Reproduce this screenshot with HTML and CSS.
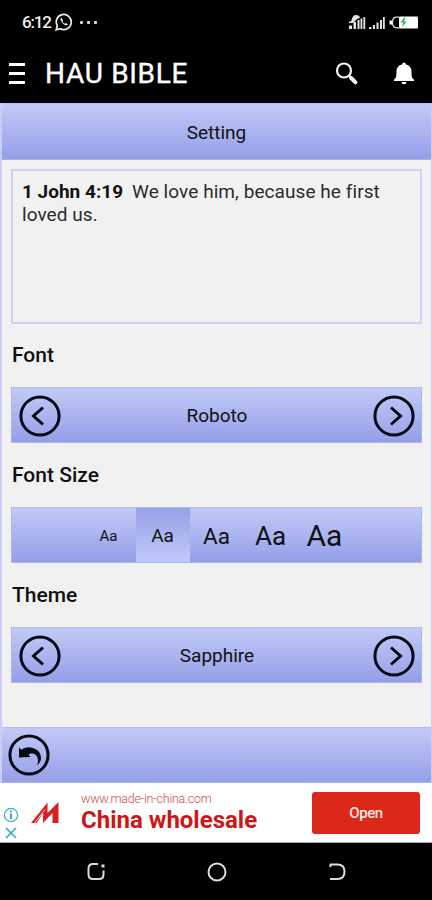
FILE: index.html
```html
<!DOCTYPE html>
<html lang="en">
<head>
<meta charset="utf-8">
<title>HAU Bible</title>
<link rel="stylesheet" href="styles.css">
</head>
<body>
<div class="status">
  <span class="time">6:12</span>
  <svg class="wa" width="18" height="18" viewBox="0 0 18 18"><path d="M1.2 16.8l1.1-4A7.5 7.5 0 1 1 5.400 15.700z" fill="none" stroke="#eee" stroke-width="1.700"/><path d="M6.300 4.600c-1.500 1.200-.8 3.300 1.200 5.400s4.300 3.300 5.400 1.400l-2-1.500-1 .8c-1-.4-2-1.400-2.500-2.500l.8-1z" fill="#eee"/></svg>
  <span class="dots"><i></i><i></i><i></i></span>
  <svg class="signals" width="72" height="18" viewBox="0 0 72 18"><g fill="#e4e4e4"><path d="M1 12.500h3V16H1zM5.500 9H8v7H5.500zM9.500 7h2v9h-2zM12.500 5.500h1.800V16h-1.800zM15.400 4h1.800v12h-1.800zM21 14h2.500v2H21zM25 12h2v4h-2zM28.500 9.500h2V16h-2zM32 7h2v9h-2zM35 4h1.800v12H35z"/><path d="M1 8.500h2l1-3C5 3 6 2 8 2s4 1 4 3l-3 1-2 2-2 2H1z"/></g><path d="M51 4.200h-2.500q-4 0-4 5.300t4 5.300H51" fill="none" stroke="#ddd" stroke-width="1.300"/><rect x="51" y="3.500" width="19" height="12" rx="1" fill="#fff"/><path d="M41.500 7.500H44v4h-2.500z" fill="#fff"/><path d="M56.500 4.500l-4 5h2.800l-1.600 5 5-6h-2.800l1.600-4z" fill="#20b95a"/></svg>
</div>
<header class="appbar">
  <span class="burger"><i></i><i></i><i></i></span>
  <h1>HAU BIBLE</h1>
  <svg class="search" width="24" height="24" viewBox="0 0 24 24" fill="none" stroke="#f5f5f5"><circle cx="9" cy="8.500" r="7" stroke-width="2.200"/><path d="M14 13.500l2.500 2.500" stroke-width="2"/><path d="M16 15.800l4.500 4.500" stroke-width="4" stroke-linecap="round"/></svg>
  <svg class="bell" width="22" height="24" viewBox="0 0 22 24" fill="#fff"><path d="M11 .5c1 0 1.600.8 1.700 1.700C16 3 18.500 5.500 18.500 9.500c0 5 .5 7 2.500 8.100V19H1v-1.400C3 16.500 3.500 14.500 3.500 9.500c0-4 2.500-6.500 5.800-7.300C9.400 1.300 10 .5 11 .5zM8.500 20h5a2.500 2.300 0 0 1-5 0z"/></svg>
</header>
<main class="page">
  <div class="bar heading"><span>Setting</span></div>
  <div class="content">
    <p class="verse"><b>1 John 4:19</b><span>We love him, because he first<br>loved us.</span></p>
    <h2>Font</h2>
    <div class="bar picker">
      <svg width="42" height="42" viewBox="0 0 42 42"><circle cx="21" cy="21" r="19.100"/><path d="M24 12.500L14.500 21l9.500 8.500"/></svg>
      <span>Roboto</span>
      <svg width="42" height="42" viewBox="0 0 42 42"><circle cx="21" cy="21" r="19.100"/><path d="M18 12.500l9.500 8.500-9.500 8.500"/></svg>
    </div>
    <h2 class="size-title">Font Size</h2>
    <div class="bar sizes"><span class="s1">Aa</span><span class="s2 selected">Aa</span><span class="s3">Aa</span><span class="s4">Aa</span><span class="s5">Aa</span></div>
    <h2>Theme</h2>
    <div class="bar picker">
      <svg width="42" height="42" viewBox="0 0 42 42"><circle cx="21" cy="21" r="19.100"/><path d="M24 12.500L14.500 21l9.500 8.500"/></svg>
      <span>Sapphire</span>
      <svg width="42" height="42" viewBox="0 0 42 42"><circle cx="21" cy="21" r="19.100"/><path d="M18 12.500l9.500 8.500-9.500 8.500"/></svg>
    </div>
  </div>
  <footer class="bar back">
    <svg width="42" height="42" viewBox="0 0 42 42"><circle cx="21" cy="21" r="19.100"/><path class="arrow" d="M11 13.500l2.500 2.200c2-1.800 5.500-2.700 9-2.300 6.500.7 10.500 5 10.500 10.500 0 3-1.500 5.500-4 7.500 2-5.500 1-11.500-5-11.800-1.500 0-2.500.3-3.500 1l2 2.400L11 23.500z"/></svg>
  </footer>
</main>
<aside class="ad">
  <svg class="choices" width="16" height="34" viewBox="0 0 16 34" fill="none" stroke="#36a9cf"><circle cx="8.500" cy="9" r="6.600" stroke-width="1.200"/><path d="M8.500 7.500V13M8.500 4.500v1.800" stroke-width="2"/><path d="M3.500 22l10 10M13.500 22l-10 10" stroke-width="1.700"/></svg>
  <svg class="logo" width="30" height="24" viewBox="0 0 30 24"><path fill="#d81f20" d="M0 22L16.500 1.500V12L27.500 1v21H21.500V12L12 22V12L5.500 22z"/><path d="M3.500 22L14 8.500M7 22l5.500-8.500" stroke="#fff" stroke-width=".8"/></svg>
  <div class="copy"><span class="url">www.made-in-china.com</span><strong>China wholesale</strong></div>
  <span class="open">Open</span>
</aside>
<nav class="sysnav">
  <svg width="20" height="20" viewBox="0 0 20 20"><path d="M12 2H7Q2.500 2 2.500 6.500v6q0 4.500 4.500 4.500h6q4.500 0 4.500-4.500V8.500"/><path d="M15.500 4h3" stroke-width="3"/></svg>
  <svg width="20" height="20" viewBox="0 0 20 20"><circle cx="10" cy="10" r="8.500"/></svg>
  <svg width="20" height="20" viewBox="0 0 20 20"><path d="M3 2.500h7.500q7 0 7 7.200t-7 7.300H3M3.500 2v3"/></svg>
</nav>
</body>
</html>
```
FILE: styles.css
```css
* { box-sizing: border-box; }
body { margin: 0; width: 432px; height: 900px; overflow: hidden; background: #000; font-family: Roboto, sans-serif; color: #111; }
svg { display: block; flex: none; }
.status { height: 44px; display: flex; align-items: center; padding: 0 11px 0 22px; color: #eee; }
.time { font-size: 17px; width: 33px; letter-spacing: -1.200px; font-weight: 500; }
.dots { display: flex; gap: 4px; margin-left: 7px; }
.dots i { width: 3px; height: 3px; background: #ddd; border-radius: 1px; }
.signals { margin-left: auto; margin-right: 1px; }
.appbar { height: 59px; display: flex; align-items: center; padding: 0 17px 0 9px; color: #fff; }
.burger { display: grid; gap: 6px; width: 16px; margin-right: 20px; }
.burger i { height: 3px; background: #fff; }
h1 { margin: 0; font-size: 28px; line-height: 32px; font-weight: 400; letter-spacing: .7px; -webkit-text-stroke: .4px #fff; }
.search { margin-left: auto; margin-right: 34px; }
.page { height: 680px; background: #f1f1f1; display: flex; flex-direction: column; border: solid #cacdf5; border-width: 0 1px 0 2px; }
.bar { height: 56px; background: linear-gradient(#c1caf6, #959fe9); display: flex; align-items: center; font-size: 19px; border: 1px solid #aab4ee; border-top-color: #b5bfef; }
.heading { height: 57px; justify-content: center; flex: none; border-width: 1px 0; padding-bottom: 0; }
.heading span { padding-top: 2px; }
.content { flex: 1; padding: 9px 9px 0; }
.verse { margin: 0; height: 155px; border: 2px solid #d0d1f0; padding: 9px; font-size: 19px; line-height: 23px; font-weight: 400; color: #2b2b2b; }
.verse b { font-weight: 700; margin-right: 9px; color: #111; }
.verse span { letter-spacing: .07px; }
h2 { margin: 0 0 0 1px; height: 63px; line-height: 62px; font-size: 21px; font-weight: 500; }
.bar + h2 { height: 64px; line-height: 64px; }
.picker { justify-content: space-between; padding: 0 6px 0 7px; }
.picker svg, .back svg { fill: none; stroke: #080a14; stroke-width: 3; }
.picker svg { margin-top: 1px; }
.sizes { justify-content: center; line-height: 56px; }
.sizes span { width: 54px; height: 54px; text-align: center; }
.sizes .selected { background: linear-gradient(#96a0e8, #c0caf7); }
.s1 { font-size: 15px; } .s2 { font-size: 19px; } .s3 { font-size: 22.500px; } .s4 { font-size: 26px; } .s5 { font-size: 30px; }
.back { padding-left: 6px; flex: none; border-width: 1px 0; }
.back .arrow { fill: #080a14; stroke: none; }
.ad { height: 60px; background: #fff; display: flex; align-items: center; padding: 0 12px 0 2px; border-bottom: 1px solid #aaa; }
.choices { margin-top: 20px; width: 17px; }
.logo { margin-left: 12px; }
.copy { margin-left: 20px; display: flex; flex-direction: column; color: #cf1517; }
.url { font-size: 12.500px; line-height: 14px; font-weight: 300; letter-spacing: -.25px; color: #d44a4c; }
.copy strong { font-size: 24px; line-height: 28px; font-weight: 700; }
.open { margin-left: auto; width: 108px; height: 42px; background: #dc2819; border-radius: 3px; color: #ffe9e6; font-size: 15px; font-weight: 500; letter-spacing: -.4px; line-height: 42px; text-align: center; }
.sysnav { height: 57px; display: flex; justify-content: space-between; align-items: center; padding: 0 85px 0 86px; }
.sysnav svg { fill: none; stroke: #ddd; stroke-width: 2; }
```
